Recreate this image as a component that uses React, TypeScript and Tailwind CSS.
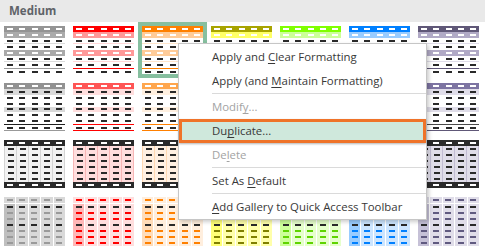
import React from "react";

type Pal = {
  h1: string;
  b1: string;
  l1: string;
  t1: string;
  h2: string;
  b2: string;
  t2: string;
  body3: string;
  v3: string;
  h4: string;
  c4: string;
  d4: string;
};

const pals: Pal[] = [
  {
    h1: "bg-[#949494]",
    b1: "bg-[#aaaaaa]",
    l1: "border-[#dcdcdc]",
    t1: "border-[#999999]",
    h2: "bg-[#929292]",
    b2: "bg-[#d9d9d9]",
    t2: "border-t-[#1e1e1e] border-b-[#999999]",
    body3: "bg-[#f2f2f2]",
    v3: "border-[#d4d4d4]",
    h4: "bg-[#d9d9d9]",
    c4: "bg-[#bfbfbf]",
    d4: "bg-[#9a9a9a]",
  },
  {
    h1: "bg-[#ff0000]",
    b1: "bg-[#ff9999]",
    l1: "border-[#ffd9d9]",
    t1: "border-[#ff0000]",
    h2: "bg-[#ff5555]",
    b2: "bg-[#ffdede]",
    t2: "border-t-[#ff0000] border-b-[#ff0000]",
    body3: "bg-[#ffdede]",
    v3: "border-[#f7b6b6]",
    h4: "bg-[#ffdede]",
    c4: "bg-[#ffb7b7]",
    d4: "bg-[#ff0000]",
  },
  {
    h1: "bg-[#ff8000]",
    b1: "bg-[#ffcc99]",
    l1: "border-[#ffe6cc]",
    t1: "border-[#ff8000]",
    h2: "bg-[#ffa64d]",
    b2: "bg-[#fff0e0]",
    t2: "border-t-[#ff8000] border-b-[#ff8000]",
    body3: "bg-[#fff0e2]",
    v3: "border-[#ffd9b3]",
    h4: "bg-[#ffeedd]",
    c4: "bg-[#ffdcb9]",
    d4: "bg-[#ff8000]",
  },
  {
    h1: "bg-[#a8a400]",
    b1: "bg-[#ffff66]",
    l1: "border-[#ffffcc]",
    t1: "border-[#a8a400]",
    h2: "bg-[#ffff4d]",
    b2: "bg-[#ffffd0]",
    t2: "border-t-[#a8a400] border-b-[#a8a400]",
    body3: "bg-[#ffffd6]",
    v3: "border-[#ffff99]",
    h4: "bg-[#ffffaa]",
    c4: "bg-[#ffff77]",
    d4: "bg-[#7f7f00]",
  },
  {
    h1: "bg-[#80ff00]",
    b1: "bg-[#ccff99]",
    l1: "border-[#e6ffcc]",
    t1: "border-[#80ff00]",
    h2: "bg-[#a6ff4d]",
    b2: "bg-[#eeffdd]",
    t2: "border-t-[#80ff00] border-b-[#80ff00]",
    body3: "bg-[#eeffdd]",
    v3: "border-[#ccff99]",
    h4: "bg-[#e6ffcc]",
    c4: "bg-[#ccff99]",
    d4: "bg-[#5fd400]",
  },
  {
    h1: "bg-[#0080ff]",
    b1: "bg-[#99ccff]",
    l1: "border-[#cce5ff]",
    t1: "border-[#0080ff]",
    h2: "bg-[#4da6ff]",
    b2: "bg-[#ddeeff]",
    t2: "border-t-[#0080ff] border-b-[#0080ff]",
    body3: "bg-[#ddeeff]",
    v3: "border-[#b3d9ff]",
    h4: "bg-[#cce5ff]",
    c4: "bg-[#99ccff]",
    d4: "bg-[#0080ff]",
  },
  {
    h1: "bg-[#605878]",
    b1: "bg-[#b1aac6]",
    l1: "border-[#e0dde9]",
    t1: "border-[#605878]",
    h2: "bg-[#7d74a2]",
    b2: "bg-[#e0dde9]",
    t2: "border-t-[#4a4a4a] border-b-[#605878]",
    body3: "bg-[#e0dde9]",
    v3: "border-[#c2bcd3]",
    h4: "bg-[#e0dde9]",
    c4: "bg-[#c6c1d7]",
    d4: "bg-[#605a80]",
  },
];

const DARK = "bg-[#2a2a2a]";

function Dash({ c }: { c: string }) {
  return <span className={`block h-[2px] w-[6px] ${c}`} />;
}

function Row({ bg, dash, extra = "" }: { bg: string; dash: string; extra?: string }) {
  return (
    <div className={`flex h-[6px] items-center ${bg} ${extra}`}>
      {[0, 1, 2, 3, 4].map((i) => (
        <div key={i} className="flex flex-1 justify-center">
          <Dash c={dash} />
        </div>
      ))}
    </div>
  );
}

// light style with row lines
function StyleA({ p }: { p: Pal }) {
  return (
    <div className="flex h-[48px] w-[61px] flex-col">
      <Row bg={p.h1} dash="bg-white" />
      <Row bg={p.b1} dash="bg-white" />
      <Row bg="bg-white" dash={DARK} extra={`border-b ${p.l1}`} />
      <Row bg="bg-white" dash={DARK} />
      <Row bg={p.b1} dash="bg-white" />
      <Row bg="bg-white" dash={DARK} extra={`border-b ${p.l1}`} />
      <Row bg="bg-white" dash={DARK} />
      <Row bg="bg-white" dash={DARK} extra={`border-t ${p.t1}`} />
    </div>
  );
}

// banded with double total line
function StyleB({ p }: { p: Pal }) {
  return (
    <div className="flex h-[48px] w-[61px] flex-col">
      <Row bg={p.h2} dash="bg-white" />
      <Row bg={p.b2} dash={DARK} />
      <Row bg="bg-white" dash={DARK} />
      <Row bg="bg-white" dash={DARK} />
      <Row bg={p.b2} dash={DARK} />
      <Row bg="bg-white" dash={DARK} />
      <Row bg="bg-white" dash={DARK} extra="h-[5px]" />
      <Row bg="bg-white" dash={DARK} extra={`h-[7px] border-t border-b ${p.t2}`} />
    </div>
  );
}

// dark header/total, tinted columns
function StyleC({ p }: { p: Pal }) {
  return (
    <div className="flex h-[48px] w-[61px] flex-col">
      <Row bg={DARK} dash="bg-white" />
      <div className={`flex h-[36px] border-r ${p.v3} ${p.body3}`}>
        {[0, 1, 2, 3, 4].map((i) => (
          <div key={i} className={`flex flex-1 flex-col border-l ${p.v3}`}>
            {[0, 1, 2, 3, 4, 5].map((j) => (
              <div key={j} className="flex h-[6px] items-center justify-center">
                <Dash c={DARK} />
              </div>
            ))}
          </div>
        ))}
      </div>
      <Row bg={DARK} dash="bg-white" />
    </div>
  );
}

// tinted cells, emphasized first column
function StyleD({ p }: { p: Pal }) {
  return (
    <div className="grid h-[48px] w-[61px] grid-cols-5 gap-x-px bg-white">
      {[0, 1, 2, 3, 4].map((i) => (
        <div key={i} className="flex flex-col gap-y-px">
          <div className={`flex h-[6px] items-center justify-center ${p.h4}`}>
            <Dash c={p.d4} />
          </div>
          <div className={`flex flex-1 flex-col ${i === 0 ? p.c4 : p.h4}`}>
            {[0, 1, 2, 3, 4, 5, 6].map((j) => (
              <div key={j} className="flex h-[6px] items-center justify-center">
                <Dash c={j === 0 || j === 3 ? DARK : p.d4} />
              </div>
            ))}
          </div>
        </div>
      ))}
    </div>
  );
}

function Item({
  children,
  disabled,
  hot,
}: {
  children: React.ReactNode;
  disabled?: boolean;
  hot?: boolean;
}) {
  return (
    <div
      className={`flex h-[24px] items-center ${
        hot
          ? "border-[3px] border-[#ef7329] bg-[#cfe8dc] pl-[30px] shadow-[0_1px_2px_rgba(0,0,0,0.3)]"
          : "pl-[33px]"
      } ${disabled ? "text-[#a3a3a3]" : "text-[#383838]"}`}
    >
      <span>{children}</span>
    </div>
  );
}

function Sep() {
  return (
    <div className="h-[2px] pl-[33px]">
      <div className="h-px bg-[#dadada]" />
    </div>
  );
}

export default function App() {
  return (
    <div
      className="relative h-[248px] w-[485px] overflow-hidden bg-white"
      style={{ fontFamily: '"Open Sans", "Noto Sans", sans-serif' }}
    >
      {/* gallery section title */}
      <div className="flex h-[22px] items-center bg-[#e9e9e9] pl-[9px]">
        <span className="text-[11.5px] font-bold text-[#5f6368]">Medium</span>
      </div>

      {/* style thumbnails */}
      <div className="pl-[4px] pt-[4px]">
        <div className="grid grid-cols-[repeat(7,61px)] gap-x-[8px] gap-y-[9px]">
          {pals.map((p, i) => (
            <div key={`a${i}`} className={i === 2 ? "outline-4 outline-[#86bf9f] outline-solid" : ""}>
              <StyleA p={p} />
            </div>
          ))}
          {pals.map((p, i) => (
            <StyleB key={`b${i}`} p={p} />
          ))}
          {pals.map((p, i) => (
            <StyleC key={`c${i}`} p={p} />
          ))}
          {pals.map((p, i) => (
            <StyleD key={`d${i}`} p={p} />
          ))}
        </div>
      </div>

      {/* context menu */}
      <div className="absolute left-[178px] top-[43px] w-[249px] border border-[#c6c6c6] bg-white pt-px text-[11.4px] shadow-[2px_2px_4px_rgba(0,0,0,0.2)]">
        <Item>
          Apply and <u className="underline-offset-2">C</u>lear Formatting
        </Item>
        <Item>
          Apply (and <u className="underline-offset-2">M</u>aintain Formatting)
        </Item>
        <Sep />
        <Item disabled>
          Modif<u className="underline-offset-2">y</u>...
        </Item>
        <Item hot>
          Du<u className="underline-offset-2">p</u>licate...
        </Item>
        <Item disabled>
          De<u className="underline-offset-2">l</u>ete
        </Item>
        <Sep />
        <Item>
          Set As <u className="underline-offset-2">D</u>efault
        </Item>
        <Sep />
        <Item>
          <u className="underline-offset-2">A</u>dd Gallery to Quick Access Toolbar
        </Item>
      </div>
    </div>
  );
}
